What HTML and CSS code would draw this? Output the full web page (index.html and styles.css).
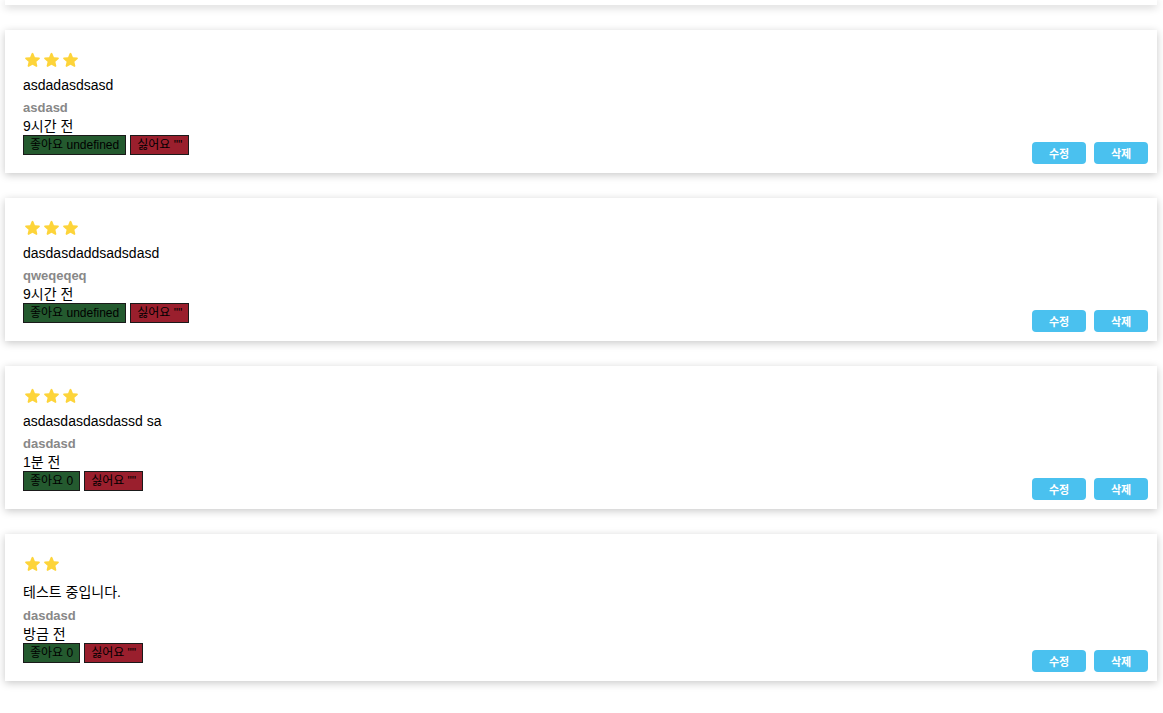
FILE: index.html
```html
<!DOCTYPE html>
<html lang="ko">
<head>
<meta charset="utf-8">
<title>리뷰 목록</title>
<link rel="stylesheet" href="styles.css">
</head>
<body>
<div class="review-list">
  <div class="card card--clipped"></div>

  <div class="card">
    <div class="review">
      <div class="stars">
        <svg class="star" viewBox="3.4 2.6 17.2 17.4"><path d="M12 17.27l4.15 2.51c.76.46 1.69-.22 1.49-1.08l-1.1-4.72 3.67-3.18c.67-.58.31-1.68-.57-1.75l-4.83-.41-1.89-4.460c-.34-.81-1.5-.81-1.84 0L9.19 8.63l-4.83.41c-.88.07-1.24 1.17-.57 1.75l3.67 3.18-1.1 4.72c-.2.86.73 1.54 1.49 1.08l4.15-2.5z"/></svg>
        <svg class="star" viewBox="3.4 2.6 17.2 17.4"><path d="M12 17.27l4.15 2.51c.76.46 1.69-.22 1.49-1.08l-1.1-4.72 3.67-3.18c.67-.58.31-1.68-.57-1.75l-4.83-.41-1.89-4.46c-.34-.81-1.5-.81-1.84 0L9.19 8.63l-4.83.41c-.88.07-1.24 1.17-.57 1.75l3.67 3.18-1.1 4.72c-.2.86.73 1.54 1.49 1.08l4.15-2.5z"/></svg>
        <svg class="star" viewBox="3.4 2.6 17.2 17.4"><path d="M12 17.27l4.15 2.51c.76.46 1.69-.22 1.49-1.08l-1.1-4.72 3.67-3.18c.67-.58.31-1.68-.57-1.75l-4.83-.41-1.89-4.46c-.34-.81-1.5-.81-1.84 0L9.19 8.63l-4.83.41c-.88.07-1.24 1.17-.57 1.75l3.67 3.18-1.1 4.72c-.2.86.73 1.54 1.49 1.08l4.15-2.5z"/></svg>
      </div>
      <p class="review__text">asdadasdsasd</p>
      <p class="review__author">asdasd</p>
      <p class="review__time">9시간 전</p>
      <div class="reactions">
        <button class="reaction reaction--like">좋아요 undefined</button>
        <button class="reaction reaction--dislike">싫어요 ""</button>
      </div>
    </div>
    <div class="actions">
      <button class="action">수정</button>
      <button class="action">삭제</button>
    </div>
  </div>

  <div class="card">
    <div class="review">
      <div class="stars">
        <svg class="star" viewBox="3.4 2.6 17.2 17.4"><path d="M12 17.27l4.15 2.51c.76.46 1.69-.22 1.49-1.08l-1.1-4.72 3.67-3.18c.67-.58.31-1.68-.57-1.75l-4.83-.41-1.89-4.46c-.34-.81-1.5-.81-1.84 0L9.19 8.63l-4.83.41c-.88.07-1.24 1.17-.57 1.75l3.67 3.18-1.1 4.72c-.2.86.73 1.54 1.49 1.08l4.15-2.5z"/></svg>
        <svg class="star" viewBox="3.4 2.6 17.2 17.4"><path d="M12 17.27l4.15 2.51c.76.46 1.69-.22 1.49-1.08l-1.1-4.72 3.67-3.18c.67-.58.31-1.68-.57-1.75l-4.83-.41-1.89-4.46c-.34-.81-1.5-.81-1.84 0L9.19 8.63l-4.83.41c-.88.07-1.24 1.17-.57 1.75l3.67 3.18-1.1 4.72c-.2.86.73 1.54 1.49 1.08l4.15-2.5z"/></svg>
        <svg class="star" viewBox="3.4 2.6 17.2 17.4"><path d="M12 17.27l4.15 2.51c.76.46 1.69-.22 1.49-1.08l-1.1-4.72 3.67-3.18c.67-.58.31-1.68-.57-1.75l-4.83-.41-1.89-4.46c-.34-.81-1.5-.81-1.84 0L9.19 8.63l-4.83.41c-.88.07-1.24 1.17-.57 1.75l3.67 3.18-1.1 4.72c-.2.86.73 1.54 1.49 1.08l4.15-2.5z"/></svg>
      </div>
      <p class="review__text">dasdasdaddsadsdasd</p>
      <p class="review__author">qweqeqeq</p>
      <p class="review__time">9시간 전</p>
      <div class="reactions">
        <button class="reaction reaction--like">좋아요 undefined</button>
        <button class="reaction reaction--dislike">싫어요 ""</button>
      </div>
    </div>
    <div class="actions">
      <button class="action">수정</button>
      <button class="action">삭제</button>
    </div>
  </div>

  <div class="card">
    <div class="review">
      <div class="stars">
        <svg class="star" viewBox="3.4 2.6 17.2 17.4"><path d="M12 17.27l4.15 2.51c.76.46 1.69-.22 1.49-1.08l-1.1-4.72 3.67-3.18c.67-.58.31-1.68-.57-1.75l-4.83-.41-1.89-4.46c-.34-.81-1.5-.81-1.84 0L9.19 8.63l-4.83.41c-.88.07-1.24 1.17-.57 1.75l3.67 3.18-1.1 4.72c-.2.86.73 1.54 1.49 1.08l4.15-2.5z"/></svg>
        <svg class="star" viewBox="3.4 2.6 17.2 17.4"><path d="M12 17.27l4.15 2.51c.76.46 1.69-.22 1.49-1.08l-1.1-4.72 3.67-3.18c.67-.58.31-1.68-.57-1.75l-4.83-.41-1.89-4.46c-.34-.81-1.5-.81-1.84 0L9.19 8.63l-4.83.41c-.88.07-1.24 1.17-.57 1.75l3.67 3.18-1.1 4.72c-.2.86.73 1.54 1.49 1.08l4.15-2.5z"/></svg>
        <svg class="star" viewBox="3.4 2.6 17.2 17.4"><path d="M12 17.27l4.15 2.51c.76.46 1.69-.22 1.49-1.08l-1.1-4.72 3.67-3.18c.67-.58.31-1.68-.57-1.75l-4.83-.41-1.89-4.46c-.34-.81-1.5-.81-1.84 0L9.19 8.63l-4.83.41c-.88.07-1.24 1.17-.57 1.75l3.67 3.18-1.1 4.72c-.2.86.73 1.54 1.49 1.08l4.15-2.5z"/></svg>
      </div>
      <p class="review__text">asdasdasdasdassd sa</p>
      <p class="review__author">dasdasd</p>
      <p class="review__time">1분 전</p>
      <div class="reactions">
        <button class="reaction reaction--like">좋아요 0</button>
        <button class="reaction reaction--dislike">싫어요 ""</button>
      </div>
    </div>
    <div class="actions">
      <button class="action">수정</button>
      <button class="action">삭제</button>
    </div>
  </div>

  <div class="card">
    <div class="review">
      <div class="stars">
        <svg class="star" viewBox="3.4 2.6 17.2 17.4"><path d="M12 17.27l4.15 2.51c.76.46 1.69-.22 1.49-1.08l-1.1-4.72 3.67-3.18c.67-.58.31-1.68-.57-1.75l-4.83-.41-1.89-4.46c-.34-.81-1.5-.81-1.84 0L9.19 8.63l-4.83.41c-.88.07-1.24 1.17-.57 1.75l3.67 3.18-1.1 4.72c-.2.86.73 1.54 1.49 1.08l4.15-2.5z"/></svg>
        <svg class="star" viewBox="3.4 2.6 17.2 17.4"><path d="M12 17.27l4.15 2.51c.76.46 1.69-.22 1.49-1.08l-1.1-4.72 3.67-3.18c.67-.58.31-1.68-.57-1.75l-4.83-.41-1.89-4.46c-.34-.81-1.5-.81-1.84 0L9.19 8.63l-4.83.41c-.88.07-1.24 1.17-.57 1.75l3.67 3.18-1.1 4.72c-.2.86.73 1.54 1.49 1.08l4.15-2.5z"/></svg>
      </div>
      <p class="review__text">테스트 중입니다.</p>
      <p class="review__author">dasdasd</p>
      <p class="review__time">방금 전</p>
      <div class="reactions">
        <button class="reaction reaction--like">좋아요 0</button>
        <button class="reaction reaction--dislike">싫어요 ""</button>
      </div>
    </div>
    <div class="actions">
      <button class="action">수정</button>
      <button class="action">삭제</button>
    </div>
  </div>
</div>
</body>
</html>
```

FILE: styles.css
```css
html, body {
  margin: 0;
  padding: 0;
  background: #fff;
}

body {
  font-family: "Liberation Sans", Arial, "Noto Sans CJK KR", sans-serif;
  color: #000;
  font-size: 14px;
}

.review-list {
  display: flex;
  flex-direction: column;
  gap: 25px;
  padding: 0 6px 40px 5px;
}

.card {
  display: flex;
  justify-content: space-between;
  align-items: flex-end;
  background: #fff;
  padding: 18px 9px 9px 18px;
  box-shadow: 0 2px 8px rgba(0, 0, 0, 0.22);
}

.card--clipped {
  height: 5px;
  padding: 0;
}

.review {
  display: flex;
  flex-direction: column;
  align-items: flex-start;
  padding-bottom: 9px;
}

.stars {
  display: flex;
  gap: 4px;
  margin: 4px 0 0 2px;
  height: 16px;
}

.star {
  width: 15px;
  height: 15px;
  fill: #fdd43a;
}

.review__text {
  margin: 9px 0 0;
  font-size: 14px;
  line-height: normal;
}

.review__author {
  margin: 7px 0 0;
  font-size: 13px;
  font-weight: bold;
  color: #888;
  line-height: normal;
}

.review__time {
  margin: 0;
  font-size: 14px;
  line-height: normal;
}

.reactions {
  display: flex;
  gap: 4px;
}

.reaction {
  font-family: "Liberation Sans", Arial, "Noto Sans CJK KR", sans-serif;
  font-size: 12px;
  line-height: 16px;
  padding: 1px 6px;
  border: 1px solid #1a1a1a;
  color: #000;
  margin: 0;
}

.reaction--like {
  background: #245a2f;
}

.reaction--dislike {
  background: #9a1f2d;
}

.actions {
  display: flex;
  gap: 8px;
}

.action {
  width: 54px;
  height: 22px;
  border: none;
  border-radius: 4px;
  background: #4ac1ef;
  color: #fff;
  font-family: "Liberation Sans", Arial, "Noto Sans CJK KR", sans-serif;
  font-size: 11px;
  font-weight: bold;
  padding: 0;
}
```
